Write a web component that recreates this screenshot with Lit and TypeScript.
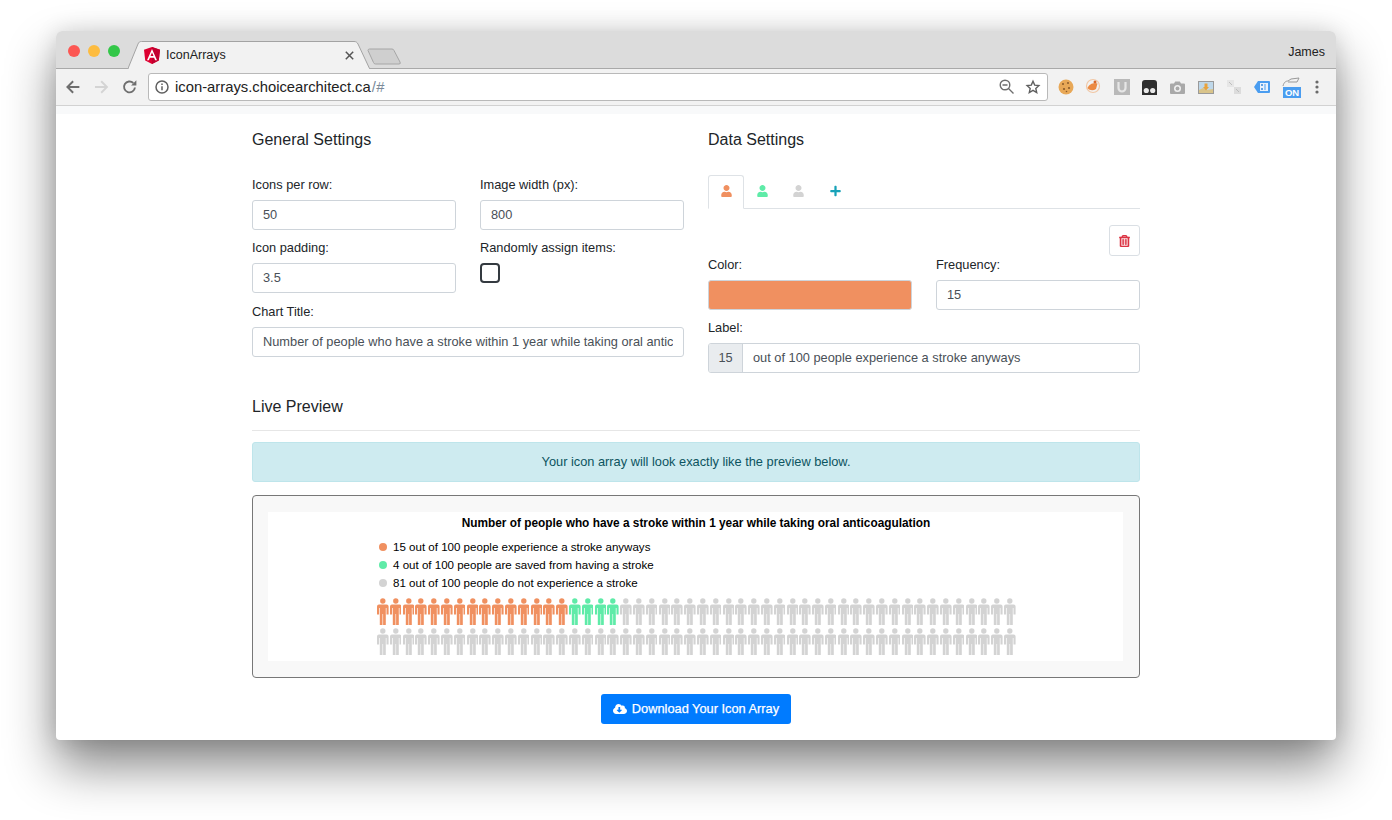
import { LitElement, css, html, svg } from 'lit';
import { customElement } from 'lit/decorators.js';

const ORANGE = '#f09060';
const GREEN = '#5feba8';
const GRAY = '#d3d3d3';

const USER = 'M224 256c70.7 0 128-57.3 128-128S294.7 0 224 0 96 57.3 96 128s57.3 128 128 128zm89.6 32h-16.7c-22.2 10.2-46.9 16-72.9 16s-50.6-5.8-72.9-16h-16.7C60.2 288 0 348.2 0 422.4V464c0 26.5 21.5 48 48 48h352c26.5 0 48-21.5 48-48v-41.6c0-74.2-60.2-134.4-134.4-134.4z';
const PLUS = 'M416 208H272V64c0-17.67-14.33-32-32-32h-32c-17.67 0-32 14.33-32 32v144H32c-17.67 0-32 14.33-32 32v32c0 17.67 14.33 32 32 32h144v144c0 17.67 14.33 32 32 32h32c17.67 0 32-14.33 32-32V304h144c17.67 0 32-14.33 32-32v-32c0-17.67-14.33-32-32-32z';
const TRASH = 'M268 416h24a12 12 0 0 0 12-12V188a12 12 0 0 0-12-12h-24a12 12 0 0 0-12 12v216a12 12 0 0 0 12 12zM432 80h-82.41l-34-56.7A48 48 0 0 0 274.41 0H173.59a48 48 0 0 0-41.16 23.3L98.41 80H16A16 16 0 0 0 0 96v16a16 16 0 0 0 16 16h16v336a48 48 0 0 0 48 48h288a48 48 0 0 0 48-48V128h16a16 16 0 0 0 16-16V96a16 16 0 0 0-16-16zM171.84 50.91A6 6 0 0 1 177 48h94a6 6 0 0 1 5.15 2.91L293.61 80H154.39zM368 464H80V128h288zm-212-48h24a12 12 0 0 0 12-12V188a12 12 0 0 0-12-12h-24a12 12 0 0 0-12 12v216a12 12 0 0 0 12 12z';
const CLOUD = 'M537.6 226.6c4.1-10.7 6.4-22.4 6.4-34.6 0-53-43-96-96-96-19.7 0-38.1 6-53.3 16.2C367 64.2 315.3 32 256 32c-88.4 0-160 71.6-160 160 0 2.7.1 5.4.2 8.1C40.2 219.8 0 273.2 0 336c0 79.5 64.5 144 144 144h368c70.7 0 128-57.3 128-128 0-61.9-44-113.6-102.4-125.4zm-132.9 88.7L299.3 420.7c-6.2 6.2-16.4 6.2-22.6 0L171.3 315.3c-10.1-10.1-2.9-27.3 11.3-27.3H248V176c0-8.8 7.2-16 16-16h48c8.8 0 16 7.2 16 16v112h65.4c14.2 0 21.4 17.2 11.3 27.3z';

function person(color: string) {
    return svg`<svg class="person" viewBox="0 0 11.6 27" fill=${color}>
        <circle cx="5.8" cy="3" r="2.7"/>
        <path d="M2 6.600H9.600Q11.600 6.600 11.600 8.600V16.500H9.500V10H8.800V27H6.100V16H5.500V27H2.800V10H2.100V16.500H0V8.600Q0 6.600 2 6.600z"/>
    </svg>`;
}

function people() {
    const out = [];
    for (let i = 0; i < 100; i++) {
        out.push(person(i < 15 ? ORANGE : i < 19 ? GREEN : GRAY));
    }
    return out;
}

@customElement('app-root')
export class AppRoot extends LitElement {
    static styles = css`
        :host {
            display: block;
            height: 820px;
            box-sizing: border-box;
            padding: 31px 56px 0;
            background: #fff;
            overflow: hidden;
            font-family: "Liberation Sans", Arial, sans-serif;
            color: #212529;
        }

        .window {
            height: 709px;
            background: #fff;
            border-radius: 6px 6px 4px 4px;
            box-shadow: 0 26px 50px rgba(0, 0, 0, .48), 0 0 22px rgba(0, 0, 0, .12);
        }

        /* chrome */
        .tabbar {
            height: 38px;
            box-sizing: border-box;
            background: #dcdcdc;
            border-bottom: 1px solid #a9a9a9;
            border-radius: 6px 6px 0 0;
            display: flex;
            align-items: flex-start;
        }
        .lights {
            display: flex;
            gap: 8px;
            padding: 14px 0 0 12px;
            width: 60px;
        }
        .lights i {
            width: 12px;
            height: 12px;
            border-radius: 50%;
        }
        .tab {
            position: relative;
            width: 242px;
            height: 28px;
            margin-top: 10px;
            display: flex;
            align-items: center;
            padding: 0 0 0 16px;
            box-sizing: border-box;
            font-size: 12.5px;
            color: #222;
        }
        .tab > svg.shape {
            position: absolute;
            left: 0;
            top: 0;
        }
        .tab .logo, .tab .title, .tab .close { position: relative; }
        .tab .title { margin-left: 6px; flex: 1; }
        .tab .close { margin-right: 16px; }
        .newtab { margin-top: 17px; margin-left: -3px; }
        .user {
            margin-left: auto;
            padding: 13px 11px 0 0;
            font-size: 12.5px;
            line-height: 16px;
            color: #222;
        }
        .toolbar {
            height: 37px;
            box-sizing: border-box;
            background: #f2f2f2;
            border-bottom: 1px solid #d2d2d2;
            display: flex;
            align-items: center;
            padding-left: 9px;
        }
        .nav { display: flex; align-items: center; width: 83px; }
        .nav svg { margin-right: 11px; }
        .nav svg.forward { margin-left: 3px; }
        .nav svg.reload { margin-left: 1px; }
        .address {
            width: 900px;
            height: 28px;
            margin-bottom: 1px;
            box-sizing: border-box;
            border: 1px solid #b9b9b9;
            border-radius: 3px;
            background: #fff;
            display: flex;
            align-items: center;
            padding: 0 6px;
            font-size: 14.8px;
            color: #222;
        }
        .address .url { margin-left: 6px; flex: 1; }
        .address .url span { color: #7a8a99; padding-left: 1px; letter-spacing: .5px; }
        .address .tools { display: flex; gap: 11px; align-items: center; }
        .exts {
            display: flex;
            align-items: center;
            margin-left: 9px;
        }
        .exts > * { flex: none; }
        .on {
            position: relative;
            width: 20px;
            height: 22px;
            margin-left: 12px;
        }
        .on b {
            position: absolute;
            left: 1px;
            bottom: 0;
            width: 18px;
            height: 11px;
            background: #4a9df0;
            color: #fff;
            font-size: 9.5px;
            line-height: 11px;
            text-align: center;
        }
        .strip {
            height: 8px;
            background: #f8f9fa;
        }

        /* page */
        .page {
            width: 888px;
            margin: 0 auto;
            padding-top: 14px;
        }
        h5 {
            margin: 0;
            font-size: 16px;
            font-weight: 400;
            line-height: 24px;
            color: #212529;
        }
        .columns {
            display: grid;
            grid-template-columns: 432px 432px;
            column-gap: 24px;
        }
        .fields {
            display: grid;
            grid-template-columns: 204px 204px;
            column-gap: 24px;
        }
        .fields.general { margin-top: 25px; }
        .group { height: 63px; }
        .general .group { height: 63.4px; }
        .wide { grid-column: 1 / -1; }
        label {
            display: block;
            font-size: 12.8px;
            line-height: 15px;
            margin-bottom: 8px;
        }
        input.text, .inputgroup {
            display: block;
            width: 100%;
            height: 30px;
            box-sizing: border-box;
            border: 1px solid #ced4da;
            border-radius: 3px;
            background: #fff;
        }
        input.text {
            padding: 0 10px 1px;
            font: 12.8px "Liberation Sans", Arial, sans-serif;
            color: #495057;
            outline: none;
        }
        .swatch {
            height: 30px;
            box-sizing: border-box;
            border: 1px solid #ced4da;
            border-radius: 3px;
            background: #f09060;
        }
        .check {
            width: 20px;
            height: 20px;
            box-sizing: border-box;
            border: 2px solid #343a40;
            border-radius: 4px;
            margin-top: 1px;
        }
        .tabs {
            display: flex;
            height: 34px;
            box-sizing: border-box;
            margin-top: 23px;
            border-bottom: 1px solid #dee2e6;
        }
        .tabs div {
            width: 36px;
            height: 34px;
            box-sizing: border-box;
            display: flex;
            align-items: center;
            justify-content: center;
            padding-bottom: 2px;
        }
        .tabs div.active {
            background: #fff;
            border: 1px solid #dee2e6;
            border-bottom-color: #fff;
            border-radius: 3px 3px 0 0;
        }
        .tabs div.add { padding-left: 2px; }
        .trashrow {
            display: flex;
            justify-content: flex-end;
            margin: 16px 0 1px;
        }
        .trash {
            width: 31px;
            height: 31px;
            box-sizing: border-box;
            border: 1px solid #dadfe4;
            border-radius: 3px;
            display: flex;
            align-items: center;
            justify-content: center;
        }
        .inputgroup {
            display: flex;
            align-items: center;
            font-size: 12.8px;
            color: #495057;
        }
        .inputgroup .addon {
            width: 34px;
            height: 100%;
            box-sizing: border-box;
            background: #e9ecef;
            border-right: 1px solid #ced4da;
            border-radius: 2px 0 0 2px;
            display: flex;
            align-items: center;
            justify-content: center;
            padding-bottom: 1px;
        }
        .inputgroup .rest { padding: 0 0 1px 10px; }

        .live { margin-top: 12px; }
        hr {
            margin: 11px 0;
            border: 0;
            border-top: 1px solid #e6e6e6;
        }
        .alert {
            height: 40px;
            box-sizing: border-box;
            display: flex;
            align-items: center;
            justify-content: center;
            padding-bottom: 1px;
            background: #ceebf0;
            border: 1px solid #bee5eb;
            border-radius: 3px;
            color: #0c5460;
            font-size: 12.8px;
        }
        .preview {
            margin-top: 13px;
            height: 183px;
            box-sizing: border-box;
            border: 1px solid #777;
            border-radius: 4px;
            background: #f8f8f8;
            padding: 16px 16px 16px 15px;
        }
        .sheet {
            height: 149px;
            background: #fff;
            color: #000;
        }
        .sheet .heading {
            text-align: center;
            font-size: 11.85px;
            font-weight: 700;
            line-height: 14px;
            padding: 4px 0 0 1px;
        }
        .legend {
            margin: 8px 0 0 111px;
            font-size: 11.55px;
        }
        .legend div {
            display: flex;
            align-items: center;
            height: 18.2px;
        }
        .legend i {
            width: 8px;
            height: 8px;
            border-radius: 50%;
            margin-right: 6px;
            flex: none;
        }
        .icons {
            display: grid;
            grid-template-columns: repeat(50, 12.8px);
            row-gap: 2.5px;
            margin: 5.6px 0 0 109px;
        }
        .person {
            width: 11.6px;
            height: 27px;
            display: block;
        }
        .actions {
            display: flex;
            justify-content: center;
            margin-top: 16px;
        }
        .download {
            width: 190px;
            height: 30px;
            display: flex;
            align-items: center;
            justify-content: center;
            gap: 5px;
            padding-bottom: 1px;
            box-sizing: border-box;
            background: #007bff;
            border-radius: 3px;
            color: #fff;
            font-size: 12.8px;
            -webkit-text-stroke: .25px #fff;
        }
    `;

    private _chrome() {
        return html`
            <div class="tabbar">
                <div class="lights">
                    <i style="background:#fc5753"></i><i style="background:#fdbc40"></i><i style="background:#33c748"></i>
                </div>
                <div class="tab">
                    <svg class="shape" width="242" height="28" viewBox="0 0 242 28">
                        <path d="M0 27.500L10 3C10.800 1.200 11.500 .5 13.500 .5H226C228 .5 229 1.200 230 3L241.500 27.500" fill="#f2f2f2" stroke="#a3a3a3"/>
                        <rect x="1" y="27" width="240" height="1" fill="#f2f2f2"/>
                    </svg>
                    <svg class="logo" width="16" height="17" viewBox="0 0 250 265">
                        <path fill="#dd0031" d="M125 0 0 44.600 19 210 125 265 231 210 250 44.600z"/>
                        <path fill="#c3002f" d="M125 0V265L231 210 250 44.600z"/>
                        <path fill="#fff" d="M125 31 47 205h29l16-39h66l16 39h29L125 31zm23 111h-46l23-55 23 55z"/>
                    </svg>
                    <span class="title">IconArrays</span>
                    <svg class="close" width="9" height="9" viewBox="0 0 9 9" stroke="#555" stroke-width="1.500"><path d="M.8.8l7.400 7.400M8.200.8L.8 8.200"/></svg>
                </div>
                <svg class="newtab" width="35" height="17" viewBox="0 0 35 17">
                    <path d="M1 2.500Q1 1 2.500 1H25Q26.500 1 27 2.500L33 14Q34 16 32 16H8.500Q7 16 6.500 14.500z" fill="#cfcfcf" stroke="#a6a6a6"/>
                </svg>
                <span class="user">James</span>
            </div>
            <div class="toolbar">
                <div class="nav">
                    <svg width="16" height="16" viewBox="0 0 16 16" fill="none" stroke="#6e6e6e" stroke-width="2"><path d="M15 8H2.500M8.500 2L2.500 8l6 6"/></svg>
                    <svg class="forward" width="16" height="16" viewBox="0 0 16 16" fill="none" stroke="#d4d4d4" stroke-width="2"><path d="M1 8h12.500M7.500 2l6 6-6 6"/></svg>
                    <svg class="reload" width="16" height="16" viewBox="0 0 16 16" fill="none" stroke="#6e6e6e" stroke-width="2"><path d="M13.500 8.500A5.700 5.700 0 1 1 11.800 3.800"/><path d="M9.500 6.500h5.500V1z" fill="#6e6e6e" stroke="none"/></svg>
                </div>
                <div class="address">
                    <svg width="14" height="14" viewBox="0 0 14 14" fill="none" stroke="#5f5f5f" stroke-width="1.500"><circle cx="7" cy="7" r="6"/><path d="M7 6.200v4"/><path d="M7 3.500v1.500"/></svg>
                    <span class="url">icon-arrays.choicearchitect.ca<span>/#</span></span>
                    <div class="tools">
                        <svg width="15" height="15" viewBox="0 0 15 15" fill="none" stroke="#6e6e6e" stroke-width="1.400"><circle cx="6" cy="6" r="4.800"/><path d="M3.500 6h5M9.500 9.500l5 5"/></svg>
                        <svg width="16" height="16" viewBox="0 0 16 16" fill="none" stroke="#5f5f5f" stroke-width="1.400"><path d="M8 2.200l1.700 3.900 4.200.5-3.100 2.800.9 4.100L8 11.400 4.300 13.500l.9-4.100L2.100 6.600l4.200-.5z"/></svg>
                    </div>
                </div>
                <div class="exts">${this._extensions()}</div>
            </div>
            <div class="strip"></div>
        `;
    }

    private _extensions() {
        return html`
            <svg width="18" height="18" viewBox="0 0 18 18">
                <circle cx="9" cy="9" r="7.500" fill="#e8a857"/>
                <g fill="#8a5a2a"><circle cx="6" cy="6" r="1"/><circle cx="11" cy="5" r="1"/><circle cx="12" cy="10" r="1.100"/><circle cx="7" cy="11" r="1.100"/><circle cx="9.500" cy="13.500" r=".8"/></g>
            </svg>
            <svg width="18" height="18" viewBox="0 0 18 18" style="margin-left:9px">
                <circle cx="9" cy="8" r="6.500" fill="none" stroke="#f1c7a5" stroke-width="1.200"/>
                <path d="M3.500 10C5 5.500 10 4.500 13.500 5.500L12 11C9 13 5.500 12.500 3.500 10z" fill="#ec8a42"/>
                <circle cx="11" cy="4" r="1.500" fill="#d9682a"/>
            </svg>
            <svg width="16" height="16" viewBox="0 0 16 16" style="margin-left:12px">
                <rect width="16" height="16" fill="#b9b9b9"/>
                <path d="M4.500 3v6a3.500 3.500 0 0 0 7 0V3" fill="none" stroke="#e6e6e6" stroke-width="2.200"/>
            </svg>
            <svg width="15" height="15" viewBox="0 0 15 15" style="margin-left:12px">
                <path d="M0 3Q0 0 3 0H12Q15 0 15 3V15H0z" fill="#2e2e2e"/>
                <circle cx="4.300" cy="10.500" r="2.600" fill="#e9e9e9"/><circle cx="10.700" cy="10.500" r="2.600" fill="#e9e9e9"/>
            </svg>
            <svg width="15" height="13" viewBox="0 0 15 13" style="margin-left:13px">
                <path d="M1 2.500H4L5.200 .5H9.800L11 2.500H14Q15 2.500 15 3.500V12Q15 13 14 13H1Q0 13 0 12V3.500Q0 2.500 1 2.500z" fill="#a9a9a9"/>
                <circle cx="7.500" cy="7.500" r="3.500" fill="#f0f0f0"/><circle cx="7.500" cy="7.500" r="1.900" fill="#a9a9a9"/>
            </svg>
            <svg width="16" height="13" viewBox="0 0 16 13" style="margin-left:13px">
                <rect width="16" height="13" fill="#9a9a9a"/><rect x="1" y="1" width="14" height="11" fill="#bfd8ea"/>
                <path d="M1 12V9L5 7l4 2 6-1v4z" fill="#d9c48b"/>
                <path d="M6.500 2.500h3v3.500h1.500L8 9.500 5 6h1.500z" fill="#e9a23b"/>
            </svg>
            <svg width="14" height="14" viewBox="0 0 14 14" style="margin-left:13px">
                <rect width="7" height="7" fill="#e6e6e6"/><rect x="7" y="7" width="7" height="7" fill="#dcdcdc"/>
                <path d="M2 2l3 3M9 9l3 3" stroke="#bdbdbd"/>
            </svg>
            <svg width="16" height="12" viewBox="0 0 16 12" style="margin-left:13px">
                <path d="M4 0H15Q16 0 16 1V11Q16 12 15 12H4L0 6z" fill="#4a9df0"/>
                <rect x="6" y="2" width="8" height="8" fill="#e8f2fd"/>
                <path d="M7.500 3.500h1v1h-1zM7.500 7.500h1v1h-1zM11 3v6" stroke="#4a9df0"/>
            </svg>
            <div class="on">
                <svg width="20" height="11" viewBox="0 0 20 11" style="position:absolute;left:0;top:0" fill="none" stroke="#999">
                    <path d="M1 10C2 6 4 5 6 5l3-2 8-1-2 4H6"/>
                </svg>
                <b>ON</b>
            </div>
            <svg width="4" height="14" viewBox="0 0 4 14" fill="#6a6a6a" style="margin-left:13px">
                <circle cx="2" cy="2" r="1.600"/><circle cx="2" cy="7" r="1.600"/><circle cx="2" cy="12" r="1.600"/>
            </svg>
        `;
    }

    private _general() {
        return html`
            <section>
                <h5>General Settings</h5>
                <div class="fields general">
                    <div class="group"><label>Icons per row:</label><input class="text" .value=${'50'} readonly></div>
                    <div class="group"><label>Image width (px):</label><input class="text" .value=${'800'} readonly></div>
                    <div class="group"><label>Icon padding:</label><input class="text" .value=${'3.5'} readonly></div>
                    <div class="group"><label>Randomly assign items:</label><div class="check"></div></div>
                    <div class="group wide">
                        <label>Chart Title:</label>
                        <input class="text" .value=${'Number of people who have a stroke within 1 year while taking oral anticoagulation'} readonly>
                    </div>
                </div>
            </section>
        `;
    }

    private _data() {
        const icon = (d: string, color: string) => html`<svg width="11" height="12" viewBox="0 0 448 512" fill=${color}><path d=${d}/></svg>`;
        return html`
            <section>
                <h5>Data Settings</h5>
                <div class="tabs">
                    <div class="active">${icon(USER, ORANGE)}</div>
                    <div>${icon(USER, GREEN)}</div>
                    <div>${icon(USER, GRAY)}</div>
                    <div class="add">${icon(PLUS, '#17a2b8')}</div>
                </div>
                <div class="trashrow">
                    <div class="trash"><svg width="11" height="12" viewBox="0 0 448 512" fill="#dc3545" stroke="#dc3545" stroke-width="22"><path d=${TRASH}/></svg></div>
                </div>
                <div class="fields">
                    <div class="group"><label>Color:</label><div class="swatch"></div></div>
                    <div class="group"><label>Frequency:</label><input class="text" .value=${'15'} readonly></div>
                    <div class="group wide">
                        <label>Label:</label>
                        <div class="inputgroup">
                            <span class="addon">15</span>
                            <span class="rest">out of 100 people experience a stroke anyways</span>
                        </div>
                    </div>
                </div>
            </section>
        `;
    }

    private _preview() {
        return html`
            <section class="live">
                <h5>Live Preview</h5>
                <hr>
                <div class="alert">Your icon array will look exactly like the preview below.</div>
                <div class="preview">
                    <div class="sheet">
                        <div class="heading">Number of people who have a stroke within 1 year while taking oral anticoagulation</div>
                        <div class="legend">
                            <div><i style="background:${ORANGE}"></i>15 out of 100 people experience a stroke anyways</div>
                            <div><i style="background:${GREEN}"></i>4 out of 100 people are saved from having a stroke</div>
                            <div><i style="background:${GRAY}"></i>81 out of 100 people do not experience a stroke</div>
                        </div>
                        <div class="icons">${people()}</div>
                    </div>
                </div>
                <div class="actions">
                    <div class="download">
                        <svg width="14" height="12" viewBox="0 0 640 512" fill="#fff"><path d=${CLOUD}/></svg>
                        Download Your Icon Array
                    </div>
                </div>
            </section>
        `;
    }

    render() {
        return html`
            <div class="window">
                ${this._chrome()}
                <div class="page">
                    <div class="columns">
                        ${this._general()}
                        ${this._data()}
                    </div>
                    ${this._preview()}
                </div>
            </div>
        `;
    }
}
